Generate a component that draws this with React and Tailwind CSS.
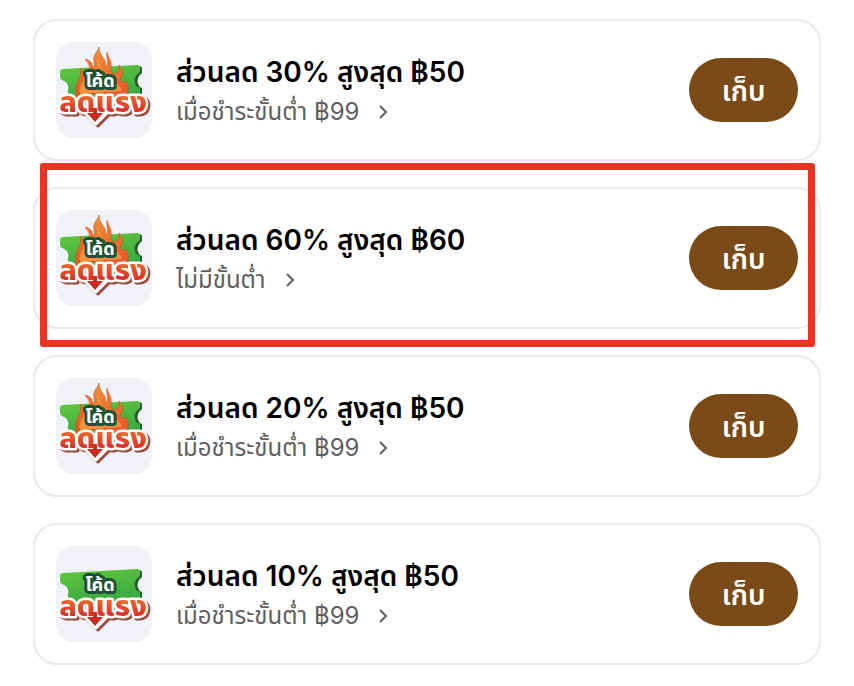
import { useId } from 'react';

const coupons = [
  { id: 1, title: 'ส่วนลด 30% สูงสุด ฿50', condition: 'เมื่อชำระขั้นต่ำ ฿99', hot: true },
  { id: 2, title: 'ส่วนลด 60% สูงสุด ฿60', condition: 'ไม่มีขั้นต่ำ', hot: true, highlighted: true },
  { id: 3, title: 'ส่วนลด 20% สูงสุด ฿50', condition: 'เมื่อชำระขั้นต่ำ ฿99', hot: true },
  { id: 4, title: 'ส่วนลด 10% สูงสุด ฿50', condition: 'เมื่อชำระขั้นต่ำ ฿99', hot: false }
];

function CouponArt({ hot }) {
  const id = useId();
  const green = `${id}-green`;
  const fire = `${id}-fire`;
  const red = `${id}-red`;

  return (
    <svg viewBox="0 0 96 96" className="size-24 shrink-0 rounded-[18px] bg-[#f1f2f7]" aria-hidden="true">
      <defs>
        <linearGradient id={green} x1="0" y1="0" x2="0.3" y2="1">
          <stop offset="0" stopColor="#62c83f" />
          <stop offset="1" stopColor="#3aa640" />
        </linearGradient>
        <linearGradient id={fire} x1="0" y1="0" x2="0" y2="1">
          <stop offset="0" stopColor="#f4943a" />
          <stop offset="0.5" stopColor="#ee6f2e" />
          <stop offset="1" stopColor="#e5532a" />
        </linearGradient>
        <linearGradient id={red} gradientUnits="userSpaceOnUse" x1="0" y1="53" x2="0" y2="71">
          <stop offset="0" stopColor="#ef6a2b" />
          <stop offset="1" stopColor="#d62b27" />
        </linearGradient>
      </defs>

      {/* ticket */}
      <path d="M8 28 L83 24 Q86 24 86 27 V31 Q80 36 82 42 Q83 45 86 46 V54 L13 60 V45 Z" fill="#245f2b" />
      <path d="M7 27 L81 23 Q84 23 84 26 V30 Q77 35 79 41 Q80 45 84 46 V54 L12 60 V48 Q14 41 6 38 Q4 37 4 34 V30 Q4 27 7 27Z" fill={`url(#${green})`} />

      {/* flames */}
      {hot && (
        <>
          <path
            d="M20 55 C19 47 21 41 23 37 C25 33 25 30 24 26 C28 29 28 32 30 34 C31 29 35 27 33 23 C32 20 30 19 29 17 C34 18 37 21 37 26 C40 23 37 19 38 15 C39 11 42 9 43 5 C43 11 46 14 48 17 C50 20 49 22 50 25 C53 21 50 15 51 10 C52 15 56 19 55 25 C54 30 57 33 60 31 C64 29 64 26 63 23 C68 27 67 31 65 36 C64 40 67 42 70 39 C73 43 73 49 71 55 Z"
            fill={`url(#${fire})`}
            stroke="#b94a22"
            strokeWidth="0.5"
          />
          <path d="M24 52 C22 44 28 40 28 36 C33 38 33 33 36 31 C42 29 40 22 43 17 C44 24 47 26 47 31 C51 34 54 33 57 37 C59 42 64 41 66 49Z" fill="#f2913a" />
        </>
      )}

      <text
        x="44"
        y="45"
        fontFamily="'Noto Sans Thai', 'Noto Sans', sans-serif"
        fontSize="18"
        fontWeight="700"
        textAnchor="middle"
        fill="#fff"
        stroke="#1b5136"
        strokeWidth="6"
        strokeLinejoin="round"
        paintOrder="stroke"
      >
        โค้ด
      </text>

      {/* lettering with the arrow hanging below it */}
      <g className="drop-shadow-[2px_2px_0_#9c4a3c]">
        <path d="M28 70 H52 L40 82Z" fill="#fff" stroke="#fff" strokeWidth="3" strokeLinejoin="round" />
        <text
          x="47"
          y="70"
          fontFamily="'Noto Sans Thai', 'Noto Sans', sans-serif"
          fontSize="29"
          fontWeight="800"
          textAnchor="middle"
          fill={`url(#${red})`}
          stroke="#fff"
          strokeWidth="5"
          strokeLinejoin="round"
          paintOrder="stroke"
        >
          ลดแรง
        </text>
      </g>
      <path d="M37 66 H41 V71 H47 L39 80 L31 71 H37Z" fill="#c92c25" />
    </svg>
  );
}

function CouponCard({ coupon }) {
  return (
    <li className="relative flex items-center gap-6 rounded-3xl border-2 border-[#e9e9e9] bg-white p-[21px]">
      <CouponArt hot={coupon.hot} />
      <div className="min-w-0 flex-1 pt-1">
        <h2 className="text-[28px] leading-10 font-semibold text-black">{coupon.title}</h2>
        <a href="#terms" className="flex items-center gap-4 text-2xl leading-10 text-[#606060]">
          {coupon.condition}
          <svg viewBox="0 0 16 16" className="size-4" fill="none" stroke="currentColor" strokeWidth="2" aria-hidden="true">
            <path d="M5 2 L11 8 L5 14" />
          </svg>
        </a>
      </div>
      <button type="button" className="h-16 w-[109px] shrink-0 rounded-full bg-[#7a4a18] pt-0.5 text-[28px] font-semibold text-white">
        เก็บ
      </button>
      {coupon.highlighted && (
        <div className="pointer-events-none absolute -top-[26px] -bottom-5 left-[5px] right-1 z-10 rounded-[3px] border-[7px] border-[#e93323]" />
      )}
    </li>
  );
}

export default function App() {
  return (
    <main className="min-h-screen bg-white px-[33px] py-[19px] font-['Inter','Noto_Sans_Thai','Noto_Sans',sans-serif]">
      <ul className="flex flex-col gap-[26px]">
        {coupons.map((c) => (
          <CouponCard key={c.id} coupon={c} />
        ))}
      </ul>
    </main>
  );
}
